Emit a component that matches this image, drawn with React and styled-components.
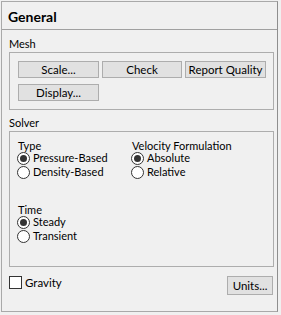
import React from "react";
import styled, { createGlobalStyle } from "styled-components";

const Global = createGlobalStyle`
  html, body { margin: 0; padding: 0; background: #f0f0f0; }
  body { width: 281px; height: 315px; overflow: hidden; font-family: Lato, "Noto Sans", sans-serif; font-size: 11px; color: #000; }
`;

const Panel = styled.div`
  box-sizing: border-box;
  margin: 1px 0 0 1px;
  width: 277px;
  height: 311px;
  border: 1px solid #a9a9a9;
  border-right-color: #8e8e8e;
  display: flex;
  flex-direction: column;
`;

const Header = styled.div`
  height: 27px;
  border-bottom: 1px solid #a0a0a0;
  padding: 0 0 0 6px;
  font-weight: bold;
  font-size: 14px;
  line-height: 29px;
`;

const Body = styled.div`
  padding: 7px 4px 0 7px;
  display: flex;
  flex-direction: column;
`;

const SectionLabel = styled.div`
  line-height: 14px;
  height: 14px;
  margin-top: ${(p) => p.$mt || 0}px;
`;

const Group = styled.div`
  box-sizing: border-box;
  width: 265px;
  height: ${(p) => p.$h}px;
  border: 1px solid #adadad;
  margin-top: 1px;
  padding: ${(p) => p.$pad};
`;

const ButtonGrid = styled.div`
  display: grid;
  grid-template-columns: 81px 80px 81px;
  column-gap: 3px;
  row-gap: 6px;
`;

const Button = styled.button`
  box-sizing: border-box;
  height: ${(p) => p.$h || 17}px;
  width: ${(p) => (p.$w ? p.$w + "px" : "auto")};
  margin: 0;
  padding: 0;
  border: 1px solid #adadad;
  background: #e1e1e1;
  font-family: inherit;
  font-size: 11.5px;
  line-height: 14px;
  color: #000;
  white-space: nowrap;
`;

const Columns = styled.div`
  display: grid;
  grid-template-columns: 114px 1fr;
`;

const Field = styled.div`
  display: flex;
  flex-direction: column;
  margin-top: ${(p) => p.$mt || 0}px;
`;

const FieldLabel = styled.div`
  line-height: 11px;
  height: 11px;
`;

const Option = styled.label`
  display: flex;
  align-items: center;
  height: 14px;
  gap: 3px;
  line-height: 14px;
  margin-left: -1px;
`;

const Circle = styled.span`
  box-sizing: border-box;
  width: 13px;
  height: 13px;
  border-radius: 50%;
  border: 1px solid #333;
  background: #fff;
  display: flex;
  align-items: center;
  justify-content: center;
  flex: none;
  &::after {
    content: "";
    width: 7px;
    height: 7px;
    border-radius: 50%;
    background: ${(p) => (p.$on ? "#333" : "transparent")};
  }
`;

const Footer = styled.div`
  display: flex;
  justify-content: space-between;
  align-items: flex-start;
  margin-top: 9px;
`;

const Check = styled.label`
  display: flex;
  align-items: center;
  gap: 3px;
  height: 13px;
  line-height: 13px;
  font-size: 11.5px;
`;

const Box = styled.span`
  box-sizing: border-box;
  width: 13px;
  height: 13px;
  border: 1px solid #333;
  background: #fff;
  flex: none;
`;

const Radio = ({ on, children }) => (
  <Option>
    <Circle $on={on} />
    <span>{children}</span>
  </Option>
);

export default function App() {
  return (
    <>
      <Global />
      <Panel>
        <Header>General</Header>
        <Body>
          <SectionLabel>Mesh</SectionLabel>
          <Group $h={58} $pad="8px 0 0 8px">
            <ButtonGrid>
              <Button>Scale...</Button>
              <Button>Check</Button>
              <Button>Report Quality</Button>
              <Button>Display...</Button>
            </ButtonGrid>
          </Group>
          <SectionLabel $mt={6}>Solver</SectionLabel>
          <Group $h={136} $pad="8px 0 0 8px">
            <Columns>
              <Field>
                <FieldLabel>Type</FieldLabel>
                <Radio on>Pressure-Based</Radio>
                <Radio>Density-Based</Radio>
              </Field>
              <Field>
                <FieldLabel>Velocity Formulation</FieldLabel>
                <Radio on>Absolute</Radio>
                <Radio>Relative</Radio>
              </Field>
            </Columns>
            <Field $mt={25}>
              <FieldLabel>Time</FieldLabel>
              <Radio on>Steady</Radio>
              <Radio>Transient</Radio>
            </Field>
          </Group>
          <Footer>
            <Check>
              <Box />
              <span>Gravity</span>
            </Check>
            <Button $h={19} $w={46}>Units...</Button>
          </Footer>
        </Body>
      </Panel>
    </>
  );
}
